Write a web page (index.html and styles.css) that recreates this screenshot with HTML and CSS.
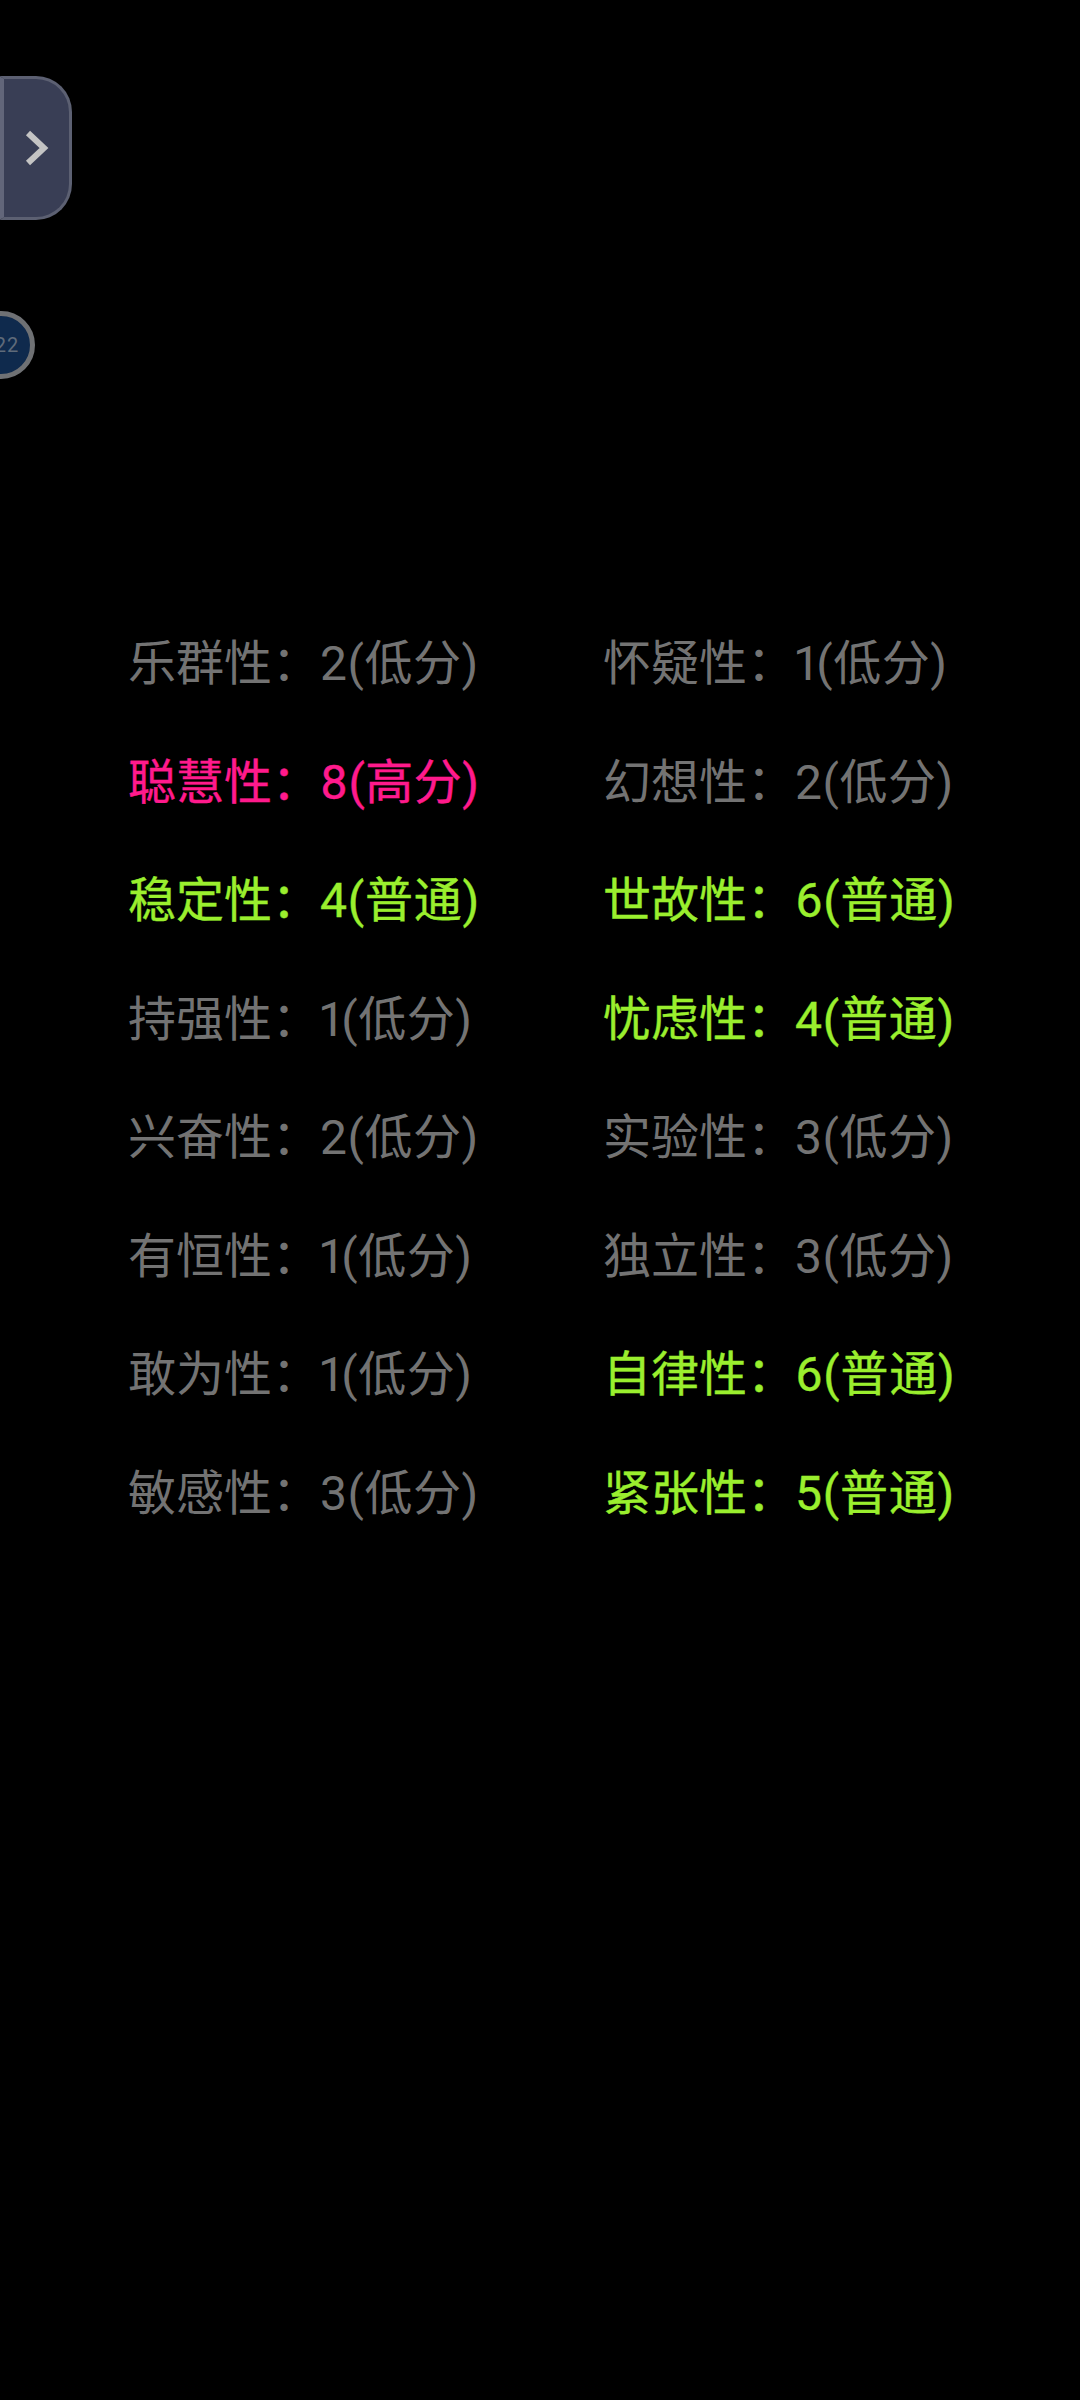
FILE: index.html
```html
<!DOCTYPE html>
<html lang="zh-CN">
<head>
  <meta charset="UTF-8">
  <meta name="viewport" content="width=device-width, initial-scale=1.0">
  <title>性格测试结果</title>
  <link rel="stylesheet" href="styles.css">
</head>
<body>

  <div class="side-tab">
    <svg class="side-arrow" width="24" height="36" viewBox="0 0 24 36">
      <path d="M3 3 L19 18 L3 33" fill="none" stroke="#c4c4c4" stroke-width="6"/>
    </svg>
  </div>

  <div class="timer"><span>22</span></div>

  <div class="results">
    <div class="item low">乐群性：<span class="score">2(低分)</span></div>
    <div class="item low">怀疑性：<span class="score">1(低分)</span></div>
    <div class="item high">聪慧性：<span class="score">8(高分)</span></div>
    <div class="item low">幻想性：<span class="score">2(低分)</span></div>
    <div class="item normal">稳定性：<span class="score">4(普通)</span></div>
    <div class="item normal">世故性：<span class="score">6(普通)</span></div>
    <div class="item low">持强性：<span class="score">1(低分)</span></div>
    <div class="item normal">忧虑性：<span class="score">4(普通)</span></div>
    <div class="item low">兴奋性：<span class="score">2(低分)</span></div>
    <div class="item low">实验性：<span class="score">3(低分)</span></div>
    <div class="item low">有恒性：<span class="score">1(低分)</span></div>
    <div class="item low">独立性：<span class="score">3(低分)</span></div>
    <div class="item low">敢为性：<span class="score">1(低分)</span></div>
    <div class="item normal">自律性：<span class="score">6(普通)</span></div>
    <div class="item low">敏感性：<span class="score">3(低分)</span></div>
    <div class="item normal">紧张性：<span class="score">5(普通)</span></div>
  </div>

</body>
</html>
```

FILE: styles.css
```css
body {
  margin: 0;
  width: 1080px;
  height: 2400px;
  overflow: hidden;
  position: relative;
  background: #000000;
  font-family: Roboto, "Noto Sans CJK SC", sans-serif;
}

.side-tab {
  position: absolute;
  left: 0;
  top: 76px;
  width: 72px;
  height: 144px;
  box-sizing: border-box;
  border: 3px solid #5c6072;
  border-left: 4px solid #62667a;
  border-radius: 0 36px 36px 0;
  background: #393e55;
}

.side-arrow {
  position: absolute;
  left: 21px;
  top: 51px;
}

.timer {
  position: absolute;
  left: -33px;
  top: 311px;
  width: 68px;
  height: 68px;
  box-sizing: border-box;
  border: 5px solid #6f7174;
  border-radius: 50%;
  background: #0f2a4d;
  display: flex;
  align-items: center;
  justify-content: center;
}

.timer span {
  color: #5f6b7a;
  font-size: 20px;
  margin-left: 12px;
  letter-spacing: 1px;
}

.results {
  padding: 605px 0 0 128px;
  display: grid;
  grid-template-columns: 475px 1fr;
  grid-auto-rows: 118.5px;
  align-items: center;
}

.item {
  font-size: 48px;
  line-height: 60px;
  white-space: nowrap;
  font-variant-numeric: proportional-nums;
}

.score {
  letter-spacing: 0.5px;
}

.low {
  color: #737373;
}

.high {
  color: #ff1a8c;
  -webkit-text-stroke: 0.4px #ff1a8c;
}

.normal {
  color: #9aef2e;
  -webkit-text-stroke: 0.4px #9aef2e;
}

.normal .score {
  letter-spacing: 0.8px;
}
```
